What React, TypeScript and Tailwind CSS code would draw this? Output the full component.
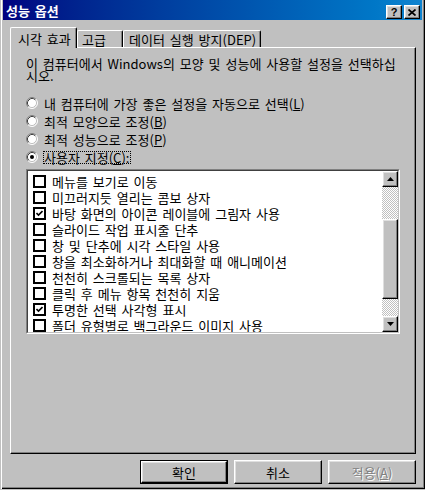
import React from 'react';

// classic 3D edge helpers
const raised =
  'border border-t-white border-l-white border-r-black border-b-black shadow-[inset_-1px_-1px_#808080,inset_1px_1px_#dfdfdf]';

const Radio: React.FC<{ checked?: boolean }> = ({ checked }) => (
  <svg width="12" height="12" viewBox="0 0 12 12" className="shrink-0">
    <circle cx="6" cy="6" r="5" fill="#ffffff" />
    <path d="M2.11 9.89 A5.5 5.5 0 0 1 9.89 2.11" stroke="#808080" fill="none" />
    <path d="M9.89 2.11 A5.5 5.5 0 0 1 2.11 9.89" stroke="#ffffff" fill="none" />
    <path d="M2.82 9.18 A4.5 4.5 0 0 1 9.18 2.82" stroke="#404040" fill="none" />
    <path d="M9.18 2.82 A4.5 4.5 0 0 1 2.82 9.18" stroke="#c0c0c0" fill="none" />
    {checked && <circle cx="6" cy="6" r="2" fill="#000000" />}
  </svg>
);

const CheckBox: React.FC<{ checked?: boolean }> = ({ checked }) => (
  <div className="w-[13px] h-[13px] shrink-0 border-2 border-black bg-white flex items-center justify-center">
    {checked && (
      <svg width="7" height="7" viewBox="0 0 7 7">
        <path d="M0.5 3 L2.5 5 L6.5 1" stroke="#000" strokeWidth="1.6" fill="none" />
      </svg>
    )}
  </div>
);

const Mn: React.FC<{ c: string }> = ({ c }) => <span className="underline underline-offset-[1px]">{c}</span>;

const ITEMS: { label: string; checked?: boolean }[] = [
  { label: '메뉴를 보기로 이동' },
  { label: '미끄러지듯 열리는 콤보 상자' },
  { label: '바탕 화면의 아이콘 레이블에 그림자 사용', checked: true },
  { label: '슬라이드 작업 표시줄 단추' },
  { label: '창 및 단추에 시각 스타일 사용' },
  { label: '창을 최소화하거나 최대화할 때 애니메이션' },
  { label: '천천히 스크롤되는 목록 상자' },
  { label: '클릭 후 메뉴 항목 천천히 지움' },
  { label: '투명한 선택 사각형 표시', checked: true },
  { label: '폴더 유형별로 백그라운드 이미지 사용' },
];

const ScrollArrow: React.FC<{ up?: boolean }> = ({ up }) => (
  <div className={`h-[16px] bg-[#c0c0c0] flex items-center justify-center ${raised}`}>
    <svg width="7" height="4" viewBox="0 0 7 4">
      {up ? <path d="M3.5 0 L7 4 L0 4 Z" fill="#000" /> : <path d="M0 0 L7 0 L3.5 4 Z" fill="#000" />}
    </svg>
  </div>
);

const track =
  'bg-[repeating-conic-gradient(#c0c0c0_0%_25%,#ffffff_0%_50%)] bg-[length:2px_2px]';

export default function App() {
  return (
    <div className="w-[425px] h-[490px] bg-[#c0c0c0] font-['Noto_Sans_CJK_KR',sans-serif] text-[13px] [word-spacing:2px] text-black leading-[13px]">
      <div className="h-[489px] flex flex-col px-[3px] pb-[3px] shadow-[inset_1px_0_#c0c0c0,inset_2px_0_#ffffff,inset_-1px_-1px_#000000,inset_-2px_-2px_#808080]">
        {/* title bar */}
        <div className="h-[20px] flex items-start bg-gradient-to-r from-[#000080] to-[#1084d0] pr-[2px]">
          <div className="ml-[3px] mt-[3px] text-white font-bold text-[13px] leading-[15px]">성능 옵션</div>
          <div className="ml-auto mt-[5px] flex gap-[2px]">
            <div className={`w-[16px] h-[14px] bg-[#c0c0c0] flex items-center justify-center font-bold text-[11px] leading-[11px] font-['Liberation_Sans',sans-serif] ${raised}`}>
              ?
            </div>
            <div className={`w-[16px] h-[14px] bg-[#c0c0c0] flex items-center justify-center ${raised}`}>
              <svg width="8" height="7" viewBox="0 0 8 7">
                <path d="M0.5 0.5 L7.5 6.5 M7.5 0.5 L0.5 6.5" stroke="#000" strokeWidth="1.7" fill="none" />
              </svg>
            </div>
          </div>
        </div>

        <div className="flex-1 flex flex-col pl-[7px] pr-[6px] pt-[7px]">
          {/* tabs */}
          <div className="h-[20px] flex items-end">
            <div className="relative z-10 w-[67px] h-[21px] -mb-[1px] bg-[#c0c0c0] border-l border-t border-white border-r border-r-black rounded-t-[2px] shadow-[inset_-1px_0_#808080] pl-[7px] pt-[4px] whitespace-nowrap">
              시각 효과
            </div>
            <div className="w-[46px] h-[17px] border-l border-t border-white border-r border-r-black rounded-t-[2px] shadow-[inset_-1px_0_#808080] pl-[4px] pt-[2px] whitespace-nowrap">
              고급
            </div>
            <div className="w-[138px] h-[17px] border-l border-t border-white border-r border-r-black rounded-t-[2px] shadow-[inset_-1px_0_#808080] pl-[5px] pt-[2px] whitespace-nowrap">
              데이터 실행 방지(DEP)
            </div>
          </div>

          {/* panel */}
          <div className="w-[406px] h-[407px] border-l border-t border-white border-r border-b border-r-black border-b-black shadow-[inset_-1px_-1px_#808080] pl-[15px] pt-[10px] flex flex-col">
            <div className="leading-[12px] whitespace-nowrap">
              <div>이 컴퓨터에서 Windows의 모양 및 성능에 사용할 설정을 선택하십</div>
              <div>시오.</div>
            </div>

            <div className="mt-[12px] flex flex-col">
              <div className="h-[18px] flex items-center gap-[6px]">
                <Radio />
                <span>내 컴퓨터에 가장 좋은 설정을 자동으로 선택(<Mn c="L" />)</span>
              </div>
              <div className="h-[18px] flex items-center gap-[6px]">
                <Radio />
                <span>최적 모양으로 조정(<Mn c="B" />)</span>
              </div>
              <div className="h-[18px] flex items-center gap-[6px]">
                <Radio />
                <span>최적 성능으로 조정(<Mn c="P" />)</span>
              </div>
              <div className="h-[18px] flex items-center gap-[5px]">
                <Radio checked />
                <span className="border border-dotted border-black h-[13px] leading-[11px] pr-[1px]">
                  사용자 지정(<Mn c="C" />):
                </span>
              </div>
            </div>

            {/* list box */}
            <div className="mt-[3px] w-[374px] h-[165px] border-l border-t border-[#808080] border-r border-b border-r-white border-b-white">
              <div className="h-full border-l border-t border-[#404040] border-r border-b border-r-[#c0c0c0] border-b-[#c0c0c0] bg-white flex overflow-hidden">
                <div className="flex-1 pt-[2px] pl-[5px] flex flex-col">
                  {ITEMS.map((it) => (
                    <div key={it.label} className="h-[16px] shrink-0 flex items-center gap-[6px] whitespace-nowrap">
                      <CheckBox checked={it.checked} />
                      <span>{it.label}</span>
                    </div>
                  ))}
                </div>
                <div className="w-[16px] flex flex-col">
                  <ScrollArrow up />
                  <div className={`h-[32px] ${track}`} />
                  <div className={`h-[80px] bg-[#c0c0c0] ${raised}`} />
                  <div className={`flex-1 ${track}`} />
                  <ScrollArrow />
                </div>
              </div>
            </div>
          </div>

          {/* dialog buttons */}
          <div className="mt-[6px] flex justify-end gap-[6px]">
            <div className="w-[88px] h-[24px] border border-black">
              <div className={`h-full bg-[#c0c0c0] flex items-center justify-center ${raised}`}>확인</div>
            </div>
            <div className={`w-[88px] h-[24px] bg-[#c0c0c0] flex items-center justify-center ${raised}`}>취소</div>
            <div className={`w-[88px] h-[24px] bg-[#c0c0c0] flex items-center justify-center text-[#808080] [text-shadow:1px_1px_0_#ffffff] ${raised}`}>
              적용(<Mn c="A" />)
            </div>
          </div>
        </div>
      </div>
    </div>
  );
}
